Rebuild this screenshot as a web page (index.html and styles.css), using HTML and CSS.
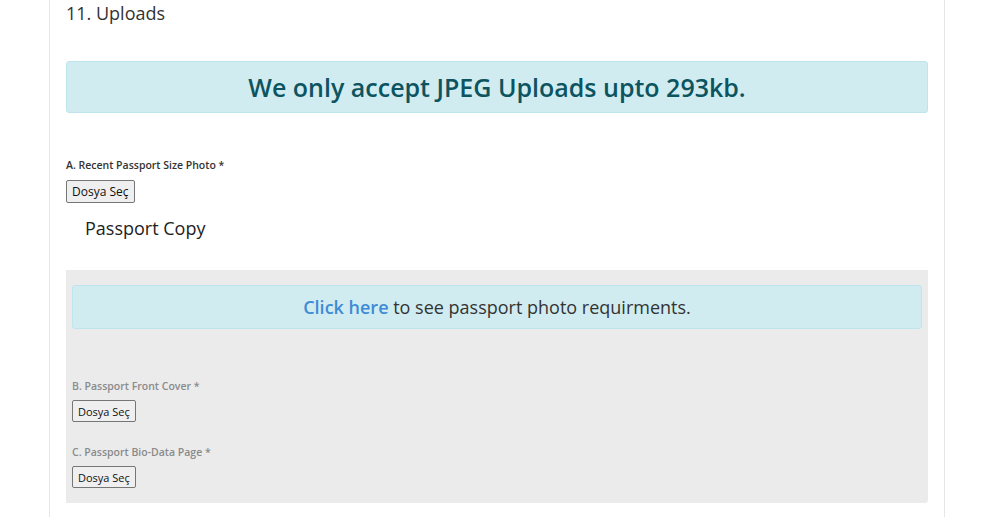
FILE: index.html
```html
<!DOCTYPE html>
<html lang="en">
<head>
    <meta charset="UTF-8">
    <meta name="viewport" content="width=device-width, initial-scale=1.0">
    <title>Uploads</title>
    <link rel="stylesheet" href="styles.css">
</head>
<body>
    <div class="page">
        <h4 class="section-title">11. Uploads</h4>

        <div class="alert alert-main">We only accept JPEG Uploads upto 293kb.</div>

        <div class="form-group">
            <label class="field-label">A. Recent Passport Size Photo *</label>
            <button type="button" class="file-btn">Dosya Seç</button>
        </div>

        <h5 class="sub-title">Passport Copy</h5>

        <div class="passport-box">
            <div class="alert alert-inner"><a href="#" class="link">Click here</a> to see passport photo requirments.</div>

            <div class="form-group muted">
                <label class="field-label">B. Passport Front Cover *</label>
                <button type="button" class="file-btn small">Dosya Seç</button>
            </div>

            <div class="form-group muted">
                <label class="field-label">C. Passport Bio-Data Page *</label>
                <button type="button" class="file-btn small">Dosya Seç</button>
            </div>
        </div>
    </div>
</body>
</html>
```

FILE: styles.css
```css
* {
    box-sizing: border-box;
    margin: 0;
    padding: 0;
}

body {
    font-family: 'Open Sans', 'Noto Sans', sans-serif;
    background: #fff;
    color: #212529;
}

.page {
    width: 896px;
    min-height: 517px;
    margin-left: 49px;
    padding: 0 16px;
    border-left: 1px solid #e6e6e6;
    border-right: 1px solid #e6e6e6;
}

.section-title {
    font-size: 18px;
    font-weight: 400;
    line-height: 26px;
    color: #333;
}

.alert {
    background: #d1ecf1;
    border: 1px solid #bee5eb;
    border-radius: 3px;
    text-align: center;
}

.alert-main {
    margin-top: 35px;
    height: 52px;
    line-height: 50px;
    font-size: 25px;
    font-weight: 600;
    color: #0c5460;
}

.form-group {
    margin-top: 44px;
}

.field-label {
    display: block;
    font-size: 10.5px;
    font-weight: 600;
    line-height: 16px;
    color: #333;
    margin-bottom: 7px;
}

.file-btn {
    display: block;
    font-family: 'Open Sans', 'Noto Sans', sans-serif;
    font-size: 12px;
    height: 23px;
    padding: 0 5px;
    background: #efefef;
    border: 1px solid #767676;
    border-radius: 2px;
    color: #111;
}

.sub-title {
    font-size: 18px;
    font-weight: 400;
    line-height: 26px;
    margin: 12px 0 0 19px;
    color: #222;
}

.passport-box {
    margin-top: 29px;
    background: #ebebeb;
    padding: 15px 6px 15px;
    border-radius: 0 0 3px 0;
}

.alert-inner {
    height: 44px;
    line-height: 42px;
    font-size: 18px;
    color: #333;
}

.link {
    color: #3d8bd4;
    font-weight: 600;
    text-decoration: none;
}

.muted {
    margin-top: 49px;
}

.muted + .muted {
    margin-top: 22px;
}

.muted .field-label {
    color: #8a8a8a;
    margin-bottom: 6px;
}

.file-btn.small {
    font-size: 11px;
    height: 22px;
    padding: 0 5px;
}
```
